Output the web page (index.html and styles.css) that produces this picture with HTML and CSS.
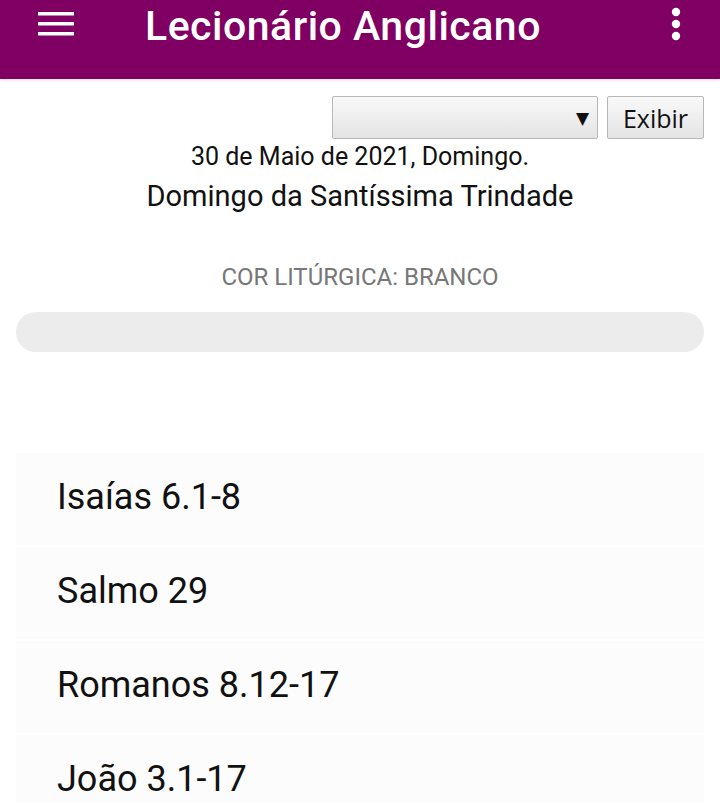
FILE: index.html
```html
<!DOCTYPE html>
<html lang="pt">
<head>
  <meta charset="UTF-8" />
  <meta name="viewport" content="width=device-width, initial-scale=1.0" />
  <title>Lecionário Anglicano</title>
  <link rel="stylesheet" href="styles.css">
</head>
<body>
  <header class="topbar">
    <svg class="menu-icon" width="36" height="24" viewBox="0 0 36 24">
      <rect x="0" y="0" width="36" height="3.5" fill="#fff"/>
      <rect x="0" y="10" width="36" height="3.5" fill="#fff"/>
      <rect x="0" y="20" width="36" height="3.5" fill="#fff"/>
    </svg>
    <h1 class="title">Lecionário Anglicano</h1>
    <svg class="more-icon" width="10" height="34" viewBox="0 0 10 34">
      <circle cx="5" cy="5" r="4.2" fill="#fff"/>
      <circle cx="5" cy="17" r="4.2" fill="#fff"/>
      <circle cx="5" cy="29" r="4.2" fill="#fff"/>
    </svg>
  </header>

  <main class="content">
    <form class="picker">
      <div class="select-box"><span class="arrow">▼</span></div>
      <button type="button" class="show-btn">Exibir</button>
    </form>

    <p class="date">30 de Maio de 2021, Domingo.</p>
    <p class="feast">Domingo da Santíssima Trindade</p>
    <p class="colour">COR LITÚRGICA: BRANCO</p>
    <div class="colour-bar"></div>

    <ul class="readings">
      <li>Isaías 6.1-8</li>
      <li>Salmo 29</li>
      <li>Romanos 8.12-17</li>
      <li>João 3.1-17</li>
    </ul>
  </main>
</body>
</html>
```

FILE: styles.css
```css
body {
  margin: 0;
  font-family: Roboto, "Liberation Sans", sans-serif;
  background: #fff;
  color: #111;
}
.topbar {
  height: 79px;
  background: #7f0062;
  display: flex;
  align-items: flex-start;
  padding: 0 39px 0 38px;
  box-shadow: 0 1px 3px rgba(0,0,0,0.15);
}
.menu-icon {
  margin-top: 12px;
  flex: none;
}
.title {
  margin: 0 0 0 71px;
  flex: 1;
  color: #fff;
  font-size: 41px;
  font-weight: 500;
  line-height: 52px;
  letter-spacing: 0.5px;
}
.more-icon {
  margin-top: 7px;
  flex: none;
}
.content {
  padding: 17px 16px 0;
}
.picker {
  display: flex;
  justify-content: flex-end;
  gap: 9px;
}
.select-box {
  width: 264px;
  height: 41px;
  border: 1px solid #b8b8b8;
  border-radius: 2px;
  background: linear-gradient(#f9f9f9, #e4e4e4);
  display: flex;
  justify-content: flex-end;
  align-items: center;
}
.arrow {
  font-family: "DejaVu Sans", sans-serif;
  font-size: 17px;
  color: #111;
  margin-right: 8px;
}
.show-btn {
  width: 97px;
  height: 43px;
  border: 1px solid #b8b8b8;
  border-radius: 2px;
  background: linear-gradient(#f9f9f9, #e4e4e4);
  font-family: "Open Sans", "Liberation Sans", sans-serif;
  font-size: 25px;
  color: #111;
  padding: 0;
}
.date {
  margin: 4px 0 0;
  text-align: center;
  font-size: 25px;
  line-height: 28px;
}
.feast {
  margin: 9px 0 0;
  text-align: center;
  font-size: 29px;
  line-height: 32px;
}
.colour {
  margin: 51px 0 0;
  text-align: center;
  font-size: 24px;
  line-height: 28px;
  color: #777;
}
.colour-bar {
  margin-top: 21px;
  height: 40px;
  border-radius: 20px;
  background: #ececec;
}
.readings {
  list-style: none;
  margin: 101px 0 0;
  padding: 0;
}
.readings li {
  height: 92px;
  margin-bottom: 2px;
  background: #fcfcfc;
  padding-left: 41px;
  font-size: 36px;
  line-height: 88px;
  color: #111;
}
```
